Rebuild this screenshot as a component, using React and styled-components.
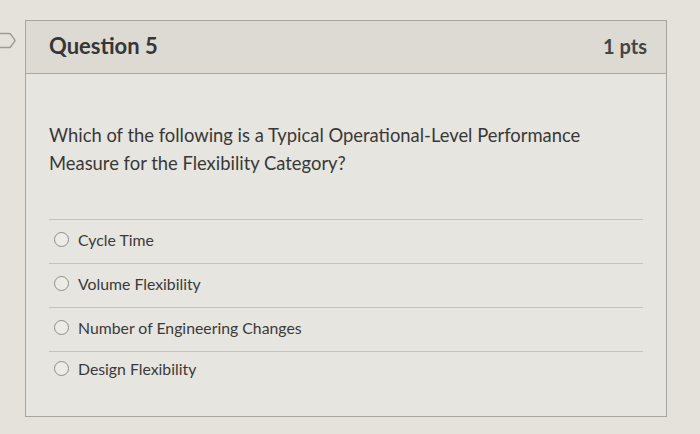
import React from "react";
import styled, { createGlobalStyle } from "styled-components";

const Global = createGlobalStyle`
  html, body { margin: 0; padding: 0; }
  body {
    background: #e5e2dc;
    font-family: Lato, "Open Sans", sans-serif;
    color: #3b3b3b;
  }
`;

const Page = styled.div`
  display: flex;
  align-items: flex-start;
  padding-top: 20px;
  width: 700px;
  height: 434px;
  box-sizing: border-box;
`;

const Marker = styled.svg`
  flex: none;
  width: 16px;
  height: 18px;
  margin-top: 12px;
  margin-right: 9px;
`;

const Card = styled.section`
  width: 642px;
  height: 397px;
  box-sizing: border-box;
  border: 1px solid #a6a5a0;
  background: #e7e5df;
  display: flex;
  flex-direction: column;
`;

const Header = styled.header`
  height: 53px;
  box-sizing: border-box;
  border-bottom: 1px solid #a9a8a3;
  background: #dcdad3;
  display: flex;
  align-items: center;
  justify-content: space-between;
  padding: 0 19px 0 23px;
`;

const Title = styled.h2`
  margin: 0;
  font-size: 22px;
  font-weight: 700;
  color: #363636;
  padding-bottom: 3px;
`;

const Points = styled.span`
  font-size: 20px;
  font-weight: 700;
  color: #444;
  padding-bottom: 2px;
`;

const Body = styled.div`
  padding: 47px 23px 0 23px;
`;

const Prompt = styled.p`
  margin: 0 0 42px 0;
  font-size: 18.4px;
  line-height: 28px;
  color: #383838;
`;

const Answers = styled.ul`
  list-style: none;
  margin: 0;
  padding: 0;
`;

const Answer = styled.li`
  display: flex;
  align-items: center;
  height: ${(p) => p.$h}px;
  box-sizing: border-box;
  border-top: 1px solid #c4c3be;
  padding: 0 0 4px 5px;
  font-size: 15.8px;
  color: #3a3a3a;
`;

const Radio = styled.span`
  flex: none;
  width: 13px;
  height: 13px;
  border-radius: 50%;
  border: 1px solid #8c8c8a;
  background: #ecebe6;
  margin-right: 9px;
`;

const answers = [
  ["Cycle Time", 44],
  ["Volume Flexibility", 44],
  ["Number of Engineering Changes", 44],
  ["Design Flexibility", 38],
];

export default function App() {
  return (
    <>
      <Global />
      <Page>
        <Marker viewBox="0 0 16 18" aria-hidden="true">
          <path
            d="M0 1.5 H9 Q10 1.5 10.8 2.4 L14.6 7.6 Q15.2 8.5 14.6 9.4 L10.8 14.6 Q10 15.5 9 15.5 H0"
            fill="none"
            stroke="#9d9c98"
            strokeWidth="1.6"
          />
        </Marker>
        <Card>
          <Header>
            <Title>Question 5</Title>
            <Points>1 pts</Points>
          </Header>
          <Body>
            <Prompt>
              Which of the following is a Typical Operational-Level Performance
              <br />
              Measure for the Flexibility Category?
            </Prompt>
            <Answers>
              {answers.map(([label, h]) => (
                <Answer key={label} $h={h}>
                  <Radio />
                  {label}
                </Answer>
              ))}
            </Answers>
          </Body>
        </Card>
      </Page>
    </>
  );
}
